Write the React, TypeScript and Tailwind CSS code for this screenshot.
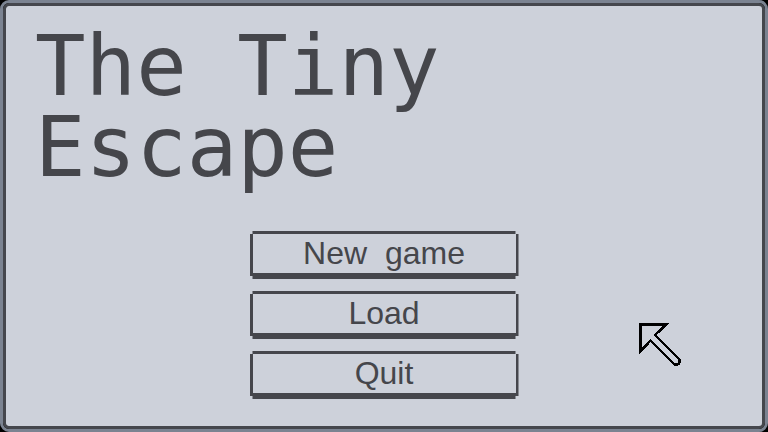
import React from "react";

const buttonClip =
  "[clip-path:polygon(3px_0,266px_0,266px_3px,269px_3px,269px_45px,266px_45px,266px_48px,3px_48px,3px_45px,0_45px,0_3px,3px_3px)]";

function MenuButton({ label }: { label: string }) {
  return (
    <div
      className={`w-[269px] h-[48px] bg-[#45464c] pt-[3px] px-[3px] pb-[6px] ${buttonClip}`}
    >
      <div className="h-full w-full bg-[#cdd1da] flex items-center justify-center">
        <span className="font-['Liberation_Sans',Arial,sans-serif] text-[32px] leading-[37px] text-[#45464b] [word-spacing:9px] whitespace-pre">
          {label}
        </span>
      </div>
    </div>
  );
}

function Pointer() {
  return (
    <svg
      width="44"
      height="46"
      viewBox="0 0 44 46"
      className="absolute left-[633px] top-[317px]"
    >
      <polygon
        points="1.5,1.5 27,1.5 16,12 40,36 41,38.5 40,40.5 38,41.5 35.5,41.5 11.5,17.5 1.5,28"
        fill="none"
        stroke="#000"
        strokeWidth="2.7"
        strokeLinejoin="miter"
        shapeRendering="crispEdges"
      />
    </svg>
  );
}

export default function App() {
  return (
    <div className="w-[768px] h-[432px] bg-black">
      <div className="w-full h-full rounded-[9px] border-[3px] border-[#7b8391]">
        <div className="relative w-full h-full rounded-[6px] border-[3px] border-[#45474d] bg-[#cdd1da] flex flex-col">
          <h1 className="pl-[29px] pt-[20px] font-['DejaVu_Sans_Mono',monospace] text-[84px] leading-[81px] text-[#45464b] font-normal">
            <span className="block">The Tiny</span>
            <span className="block">Escape</span>
          </h1>
          <div className="mt-[43px] flex flex-col items-center gap-[12px]">
            <MenuButton label="New game" />
            <MenuButton label="Load" />
            <MenuButton label="Quit" />
          </div>
          <Pointer />
        </div>
      </div>
    </div>
  );
}
